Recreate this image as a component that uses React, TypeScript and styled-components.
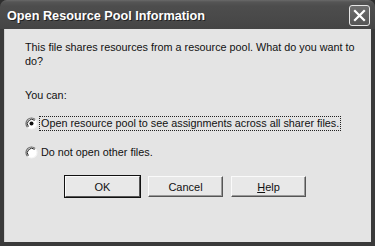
import React from "react";
import styled, { createGlobalStyle } from "styled-components";

const Global = createGlobalStyle`
  html, body { margin: 0; padding: 0; background: #2e2e2e; }
  #root { width: 375px; height: 246px; }
`;

const Win = styled.div`
  width: 375px;
  height: 246px;
  box-sizing: border-box;
  display: flex;
  flex-direction: column;
  background: #3a3a3a;
  border-radius: 7px 7px 0 0;
  overflow: hidden;
  font-family: "Liberation Sans", Arial, sans-serif;
`;

const TitleBar = styled.div`
  height: 29px;
  flex: 0 0 29px;
  display: flex;
  align-items: center;
  justify-content: space-between;
  padding: 0 5px 0 7px;
  box-sizing: border-box;
  background: linear-gradient(#6a6a6a 0px, #555 2px, #4d4d4d 6px, #474747 24px, #444 29px);
`;

const Title = styled.span`
  color: #fff;
  font-family: "Liberation Sans", Arial, sans-serif;
  font-weight: bold;
  font-size: 12.7px;
  text-shadow: 1px 1px 0 #222;
  margin-top: 2px;
`;

const CloseBtn = styled.div`
  width: 21px;
  height: 21px;
  margin-top: 2px;
  box-sizing: border-box;
  border: 1px solid #e6e6e6;
  border-radius: 3px;
  background: linear-gradient(#6e6e6e, #555);
  display: flex;
  align-items: center;
  justify-content: center;
`;

const Body = styled.div`
  flex: 1;
  margin: 0 4px 4px 4px;
  background: #e4e4e4;
  border-left: 1px solid #d0d0d0;
  padding: 11px 0 0 20px;
  display: flex;
  flex-direction: column;
  font-size: 10.8px;
  line-height: 14px;
  color: #111;
`;

const Para = styled.div<{ $mt?: number }>`
  margin-top: ${(p) => p.$mt ?? 0}px;
  width: 340px;
`;

const RadioRow = styled.div<{ $mt: number }>`
  margin-top: ${(p) => p.$mt}px;
  display: flex;
  align-items: center;
  height: 14px;
`;

const RadioLabel = styled.span<{ $focus?: boolean }>`
  margin-left: 2px;
  padding: 0 1px;
  line-height: 13px;
  outline: ${(p) => (p.$focus ? "1px dotted #222" : "none")};
  outline-offset: 0;
`;

const Buttons = styled.div`
  margin-top: 17px;
  display: flex;
  gap: 8px;
  padding-left: 40px;
`;

const Btn = styled.div<{ $def?: boolean }>`
  width: 75px;
  height: 21px;
  box-sizing: border-box;
  display: flex;
  align-items: center;
  justify-content: center;
  background: #e8e8e8;
  border: 1px solid;
  border-color: #fafafa #555 #555 #fafafa;
  box-shadow: ${(p) => (p.$def ? "0 0 0 1px #111" : "inset -1px -1px 0 #9a9a9a")};
  font-size: 11px;
  color: #111;
`;

const U = styled.span`
  text-decoration: underline;
`;

const Radio = ({ checked }: { checked?: boolean }) => (
  <svg width="13" height="13" viewBox="0 0 13 13">
    <circle cx="6.5" cy="6.5" r="5.5" fill="#fff" />
    <path d="M10.4 2.6 A5.5 5.5 0 0 0 2.6 10.4" stroke="#6a6a6a" strokeWidth="1.2" fill="none" />
    <path d="M9.6 3.4 A4.4 4.4 0 0 0 3.4 9.6" stroke="#222" strokeWidth="1" fill="none" />
    <path d="M2.6 10.4 A5.5 5.5 0 0 0 10.4 2.6" stroke="#f4f4f4" strokeWidth="1.2" fill="none" />
    {checked && <circle cx="6.5" cy="6.5" r="2" fill="#111" />}
  </svg>
);

export default function App() {
  return (
    <>
      <Global />
      <Win>
        <TitleBar>
          <Title>Open Resource Pool Information</Title>
          <CloseBtn>
            <svg width="13" height="13" viewBox="0 0 13 13">
              <path d="M2 2 L11 11 M11 2 L2 11" stroke="#fff" strokeWidth="2.2" strokeLinecap="square" />
            </svg>
          </CloseBtn>
        </TitleBar>
        <Body>
          <Para>This file shares resources from a resource pool. What do you want to do?</Para>
          <Para $mt={20}>You can:</Para>
          <RadioRow $mt={14}>
            <Radio checked />
            <RadioLabel $focus>Open resource pool to see assignments across all sharer files.</RadioLabel>
          </RadioRow>
          <RadioRow $mt={15}>
            <Radio />
            <RadioLabel>Do not open other files.</RadioLabel>
          </RadioRow>
          <Buttons>
            <Btn $def>OK</Btn>
            <Btn>Cancel</Btn>
            <Btn>
              <span>
                <U>H</U>elp
              </span>
            </Btn>
          </Buttons>
        </Body>
      </Win>
    </>
  );
}
